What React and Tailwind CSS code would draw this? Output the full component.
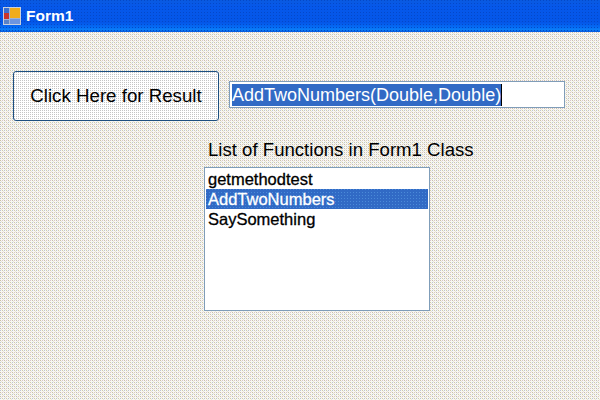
export default function App() {
  const sans = { fontFamily: '"Liberation Sans", Arial, sans-serif' };
  return (
    <div
      className="w-[600px] h-[400px] overflow-hidden flex flex-col bg-[#f8f7f2] bg-[radial-gradient(circle_at_0.5px_0.5px,#c8c0a8_0.6px,transparent_0.6px),radial-gradient(circle_at_2.5px_0.5px,#d8c4cc_0.6px,transparent_0.6px),radial-gradient(circle_at_0.5px_2.5px,#bcc4d4_0.6px,transparent_0.6px),radial-gradient(circle_at_2.5px_2.5px,#d0cca8_0.6px,transparent_0.6px),radial-gradient(circle_at_1.5px_1.5px,#e8e6d8_0.6px,transparent_0.6px),radial-gradient(circle_at_3.5px_3.5px,#e8e6d8_0.6px,transparent_0.6px)] bg-[length:4px_4px]"
      style={sans}
    >
      <div className="h-[32px] shrink-0 flex items-center pl-[3px] gap-[5px] bg-[radial-gradient(circle_at_0.5px_0.5px,#0448c8_0.6px,transparent_0.6px),linear-gradient(180deg,#0a5ae0_0%,#0658ea_20%,#0456e8_70%,#056cf4_85%,#0a80f8_94%,#0553d8_100%)] bg-[length:3px_3px,100%_100%]">
        <svg width="18" height="18" viewBox="0 0 18 18" className="shrink-0">
          <rect x="0.5" y="0.5" width="17" height="17" fill="#9fb4d8" stroke="#c9d0dc" />
          <rect x="1" y="1" width="5" height="5" fill="#3a6fd0" />
          <rect x="1" y="6" width="5" height="6" fill="#c8342c" />
          <rect x="7" y="1" width="10" height="10" fill="#f0ac1c" />
          <rect x="7" y="12" width="10" height="5" fill="#6d95e0" />
          <rect x="1" y="13" width="5" height="4" fill="#5a82c8" />
        </svg>
        <span className="text-[15.5px] leading-none font-bold text-white">Form1</span>
      </div>
      <div className="flex items-center mt-[39px] ml-[13px] gap-[10px]">
        <button className="w-[206px] h-[50px] rounded-[3px] border border-[#1d4f80] bg-white bg-[radial-gradient(circle_at_0.5px_0.5px,#c4c4c4_0.6px,transparent_0.6px)] bg-[length:2px_2px] text-black text-[18.7px] whitespace-nowrap">Click Here for Result</button>
        <div className="w-[336px] h-[27px] mb-[3px] border border-[#7f9db9] bg-white flex items-center pl-[2px]">
          <span className="bg-[#316ac5] text-white text-[18px] leading-[22px] border-r border-black whitespace-nowrap">AddTwoNumbers(Double,Double)</span>
        </div>
      </div>
      <div className="ml-[204px] mt-[18px] flex flex-col w-[226px]">
        <div className="pl-[4px] text-[18.6px] leading-[21px] text-black whitespace-nowrap">List of Functions in Form1 Class</div>
        <div className="mt-[7px] h-[144px] border border-[#7f9db9] bg-white p-[1px] text-[16.5px] leading-[20px] text-black [-webkit-text-stroke:0.3px]">
          <div className="pl-[2px]">getmethodtest</div>
          <div className="pl-[2px] bg-[#316ac5] bg-[radial-gradient(circle_at_0.5px_0.5px,#4a8ad8_0.6px,transparent_0.6px)] bg-[length:3px_3px] text-white">AddTwoNumbers</div>
          <div className="pl-[2px]">SaySomething</div>
        </div>
      </div>
    </div>
  );
}
